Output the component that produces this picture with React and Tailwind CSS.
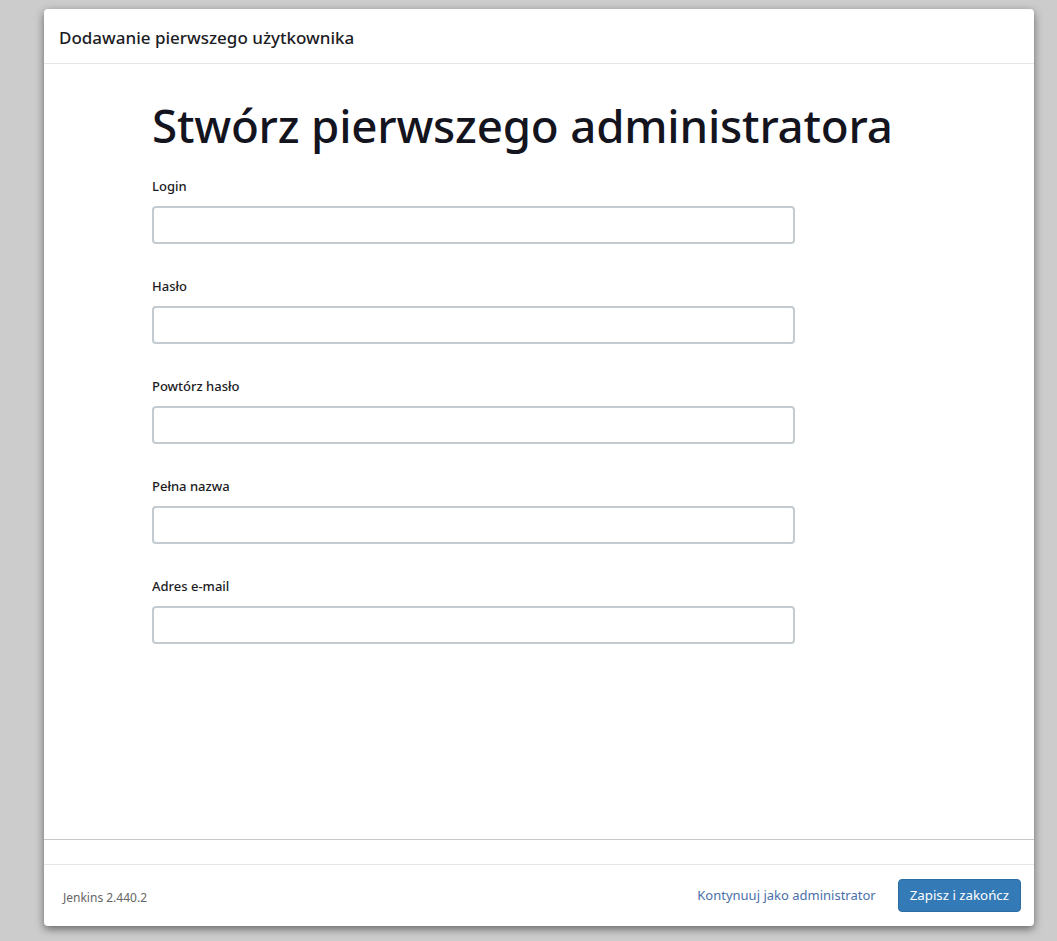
import React from "react";

const fields = ["Login", "Hasło", "Powtórz hasło", "Pełna nazwa", "Adres e-mail"];

const App = () => {
  return (
    <div
      className="min-h-screen bg-[#cccccc] pl-[44px] pt-[9px]"
      style={{ fontFamily: '"Noto Sans", "Open Sans", sans-serif' }}
    >
      <div className="w-[990px] h-[917px] bg-white rounded-[4px] shadow-[0_3px_9px_rgba(0,0,0,0.5)] flex flex-col overflow-hidden">
        <div className="h-[55px] border-b border-[#e5e5e5] px-[15px] flex items-center">
          <h4 className="text-[17px] font-medium text-[#1c1c24] leading-none pt-[2px]">
            Dodawanie pierwszego użytkownika
          </h4>
        </div>

        <div className="flex-1 border-b border-[#c8c8c8] pl-[108px] pt-[36px]">
          <h1 className="text-[45.7px] leading-[1.1] text-[#14141f] font-medium tracking-[-0.2px]">
            Stwórz pierwszego administratora
          </h1>
          <form className="mt-[27px] w-[643px] flex flex-col gap-[33px]">
            {fields.map((label) => (
              <div key={label}>
                <label className="block text-[13px] font-medium leading-[18px] text-[#1c1c24] mb-[11px]">
                  {label}
                </label>
                <input
                  type="text"
                  className="block w-full h-[38px] border-2 border-[#c3cbd0] rounded-[4px] px-3 text-sm outline-none"
                />
              </div>
            ))}
          </form>
        </div>

        <div className="h-[25px] border-b border-[#e5e5e5]" />

        <div className="h-[61px] flex items-center justify-between pl-[19px] pr-[13px]">
          <span className="text-[12px] text-[#666] pt-[4px]">Jenkins 2.440.2</span>
          <div className="flex items-center gap-[22px]">
            <a href="#" className="text-[13px] text-[#4a70a8]">
              Kontynuuj jako administrator
            </a>
            <button
              type="button"
              className="h-[33px] px-[11px] bg-[#337ab7] text-white text-[13.3px] rounded-[4px] border border-[#2e6da4]"
            >
              Zapisz i zakończ
            </button>
          </div>
        </div>
      </div>
    </div>
  );
};

export default App;
